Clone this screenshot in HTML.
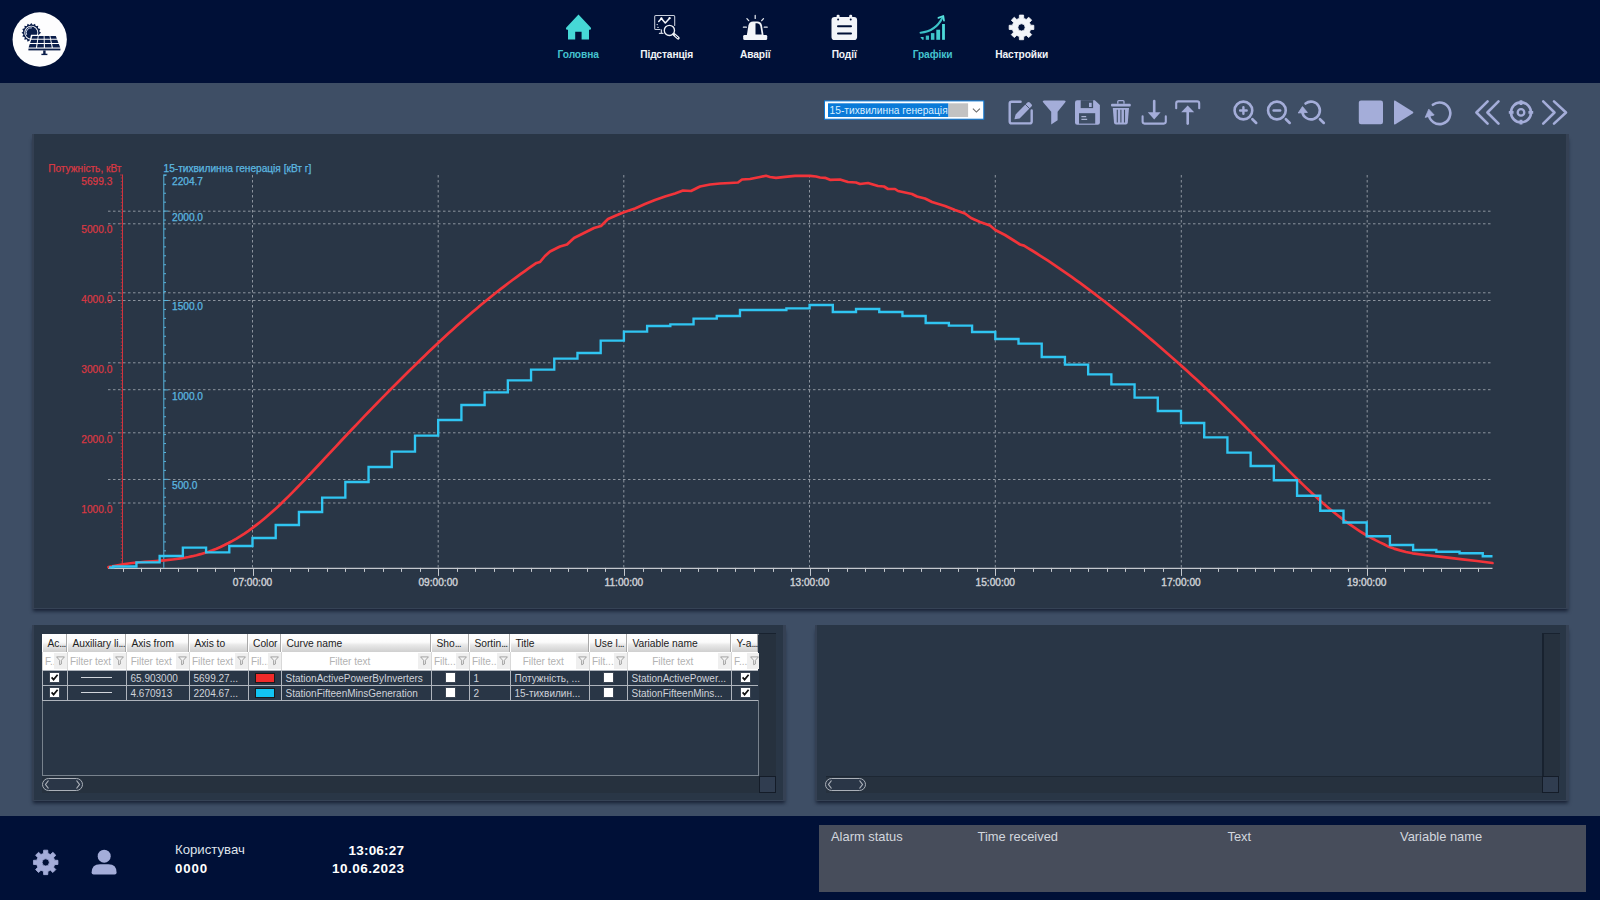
<!DOCTYPE html><html lang="uk"><head><meta charset="utf-8"><title>SCADA</title><style>
*{box-sizing:border-box;margin:0;padding:0}
html,body{width:1600px;height:900px;overflow:hidden;background:#3e4e65;font-family:"Liberation Sans",sans-serif;}
.abs{position:absolute}
#hdr{position:absolute;left:0;top:0;width:1600px;height:83px;background:#001037}
#ftr{position:absolute;left:0;top:816px;width:1600px;height:84px;background:#001037}
.panel{position:absolute;background:#293646;border-left:2px solid #344053;border-right:3px solid #354154;border-bottom:1.5px solid #354255;box-shadow:0 3.5px 3.5px -1px rgba(14,22,40,.8)}
.nav{position:absolute;top:47.5px;height:14px;line-height:14px;font-weight:bold;font-size:10.2px;color:#f2f4f8;white-space:nowrap;transform:translateX(-50%);letter-spacing:-0.1px}
.nav.on{color:#45c3d0}
svg{position:absolute;overflow:visible}
.ft{position:absolute;white-space:nowrap;color:#fff}
.al{position:absolute;top:828.6px;font-size:12.9px;line-height:15px;color:#d3d7de;white-space:nowrap}

#tb{position:absolute;left:0;top:0;font-size:10px;line-height:12px;white-space:nowrap}
#tb div{position:absolute;overflow:hidden}
.th{top:634px;height:18px;background:linear-gradient(#ffffff 0%,#fbfbfb 45%,#e9e9e9 60%,#cfcfcf 100%);color:#222;padding:3.2px 0 0 4.5px;border-left:1px solid #fff;border-right:1px solid #a9a9a9;letter-spacing:0.05px}
.tht{top:634px;height:18px;color:#222;font-size:10.25px;padding:4.1px 0 0 5.4px;overflow:visible !important}
.tf{top:652px;height:18px;background:#fff;color:#b2b2b2;padding:3.6px 0 0 2px;border-left:1px solid #d8d8d8}
.fb{top:653px;height:16px;width:11px;background:#efefef}
.td{height:15px;color:#cfd3da;padding:2.8px 0 0 4.5px}
.vl{width:1px;top:670px;height:30px;background:#aeb4bc}
.hl{height:1px;left:42px;width:716px;background:#aeb4bc}
.cb{width:11px;height:11px;background:#fff;border:1px solid #3c4654}
</style></head><body>
<div id="hdr"></div>
<svg style="left:0;top:0" width="84" height="83" viewBox="0 0 84 83">
<circle cx="39.7" cy="39.5" r="27.15" fill="#fdfdfe"/>
<polygon points="41.1,32.7 39.05,34.24 40.35,36.45 37.87,37.09 38.23,39.63 35.69,39.27 35.05,41.75 32.84,40.45 31.3,42.5 29.76,40.45 27.55,41.75 26.91,39.27 24.37,39.63 24.73,37.09 22.25,36.45 23.55,34.24 21.5,32.7 23.55,31.16 22.25,28.95 24.73,28.31 24.37,25.77 26.91,26.13 27.55,23.65 29.76,24.95 31.3,22.9 32.84,24.95 35.05,23.65 35.69,26.13 38.23,25.77 37.87,28.31 40.35,28.95 39.05,31.16" fill="#0a1d4a"/>
<circle cx="31.3" cy="32.7" r="8" fill="#0a1d4a"/>
<circle cx="31.3" cy="32.7" r="7" fill="#fdfdfe"/>
<circle cx="31.3" cy="32.7" r="6.1" fill="#0a1d4a"/>
<path d="M26.700000000000003 34.900000000000006A5 5 0 0 1 31.900000000000002 27.800000000000004" fill="none" stroke="#c9d3ea" stroke-width="1"/>
<path d="M31 34.8H57L61.4 51.4H27.2Z" fill="#fdfdfe"/>
<path d="M32.4 36.0L37.83 36.0L37.39 38.7L31.52 38.7Z" fill="#0a1d4a"/>
<path d="M38.67 36.0L43.68 36.0L43.71 38.7L38.3 38.7Z" fill="#0a1d4a"/>
<path d="M44.52 36.0L49.53 36.0L50.04 38.7L44.63 38.7Z" fill="#0a1d4a"/>
<path d="M50.37 36.0L55.8 36.0L56.82 38.7L50.95 38.7Z" fill="#0a1d4a"/>
<path d="M31.16 39.8L37.21 39.8L36.7 42.9L30.14 42.9Z" fill="#0a1d4a"/>
<path d="M38.15 39.8L43.73 39.8L43.77 42.9L37.72 42.9Z" fill="#0a1d4a"/>
<path d="M44.67 39.8L50.25 39.8L50.84 42.9L44.79 42.9Z" fill="#0a1d4a"/>
<path d="M51.19 39.8L57.24 39.8L58.42 42.9L51.86 42.9Z" fill="#0a1d4a"/>
<path d="M29.75 44.1L36.5 44.1L35.93 47.6L28.6 47.6Z" fill="#0a1d4a"/>
<path d="M37.55 44.1L43.79 44.1L43.83 47.6L37.07 47.6Z" fill="#0a1d4a"/>
<path d="M44.83 44.1L51.07 44.1L51.73 47.6L44.97 47.6Z" fill="#0a1d4a"/>
<path d="M52.12 44.1L58.87 44.1L60.2 47.6L52.87 47.6Z" fill="#0a1d4a"/>
<rect x="28.4" y="48.6" width="32" height="1.8" fill="#0a1d4a"/>
<rect x="43.2" y="50.4" width="2.4" height="3.6" fill="#0a1d4a"/>
<rect x="41.4" y="53.7" width="6" height="1.4" fill="#0a1d4a"/>
</svg>
<div class="nav on" style="left:578.2px">Головна</div>
<div class="nav" style="left:666.7px">Підстанція</div>
<div class="nav" style="left:755.2px">Аварії</div>
<div class="nav" style="left:844.2px">Події</div>
<div class="nav on" style="left:932.5px">Графіки</div>
<div class="nav" style="left:1021.7px">Настройки</div>
<svg style="left:0;top:0" width="1600" height="83" viewBox="0 0 1600 83">
<path d="M578.5 14.6L590.7 27.6Q591.8 29.8 589.6 29.8H589V39.6H581.6V31.8H575.2V39.6H568V29.8H567.4Q565.2 29.8 566.3 27.6Z" fill="#46d8d6"/>
<g fill="none" stroke="#c9cfdb" stroke-width="1.05" stroke-linecap="round" stroke-linejoin="round">
<path d="M660 29.5H655.8Q654.7 29.5 654.7 28.4V16.6Q654.7 15.5 655.8 15.5H673.6Q674.7 15.5 674.7 16.6V25.4"/>
<path d="M661.4 30V33M659.4 33.3H663" stroke-width="1.3"/>
<path d="M658.7 21.4L661.4 18.4L665.3 23L669.6 18.2" stroke-width="1.5" stroke="#f4f6fa"/>
<circle cx="669.4" cy="30.4" r="5.1" stroke-width="1.35" stroke="#eef1f6"/>
<path d="M673.9 34.3L678.2 38.1" stroke-width="3" stroke="#eef1f6"/>
</g>
<path d="M675.2 35.5L677.8 37.8" stroke="#001037" stroke-width="0.9" stroke-linecap="round"/>
<circle cx="661.4" cy="18.4" r="1.15" fill="#fff"/><circle cx="669.6" cy="18.2" r="1.15" fill="#fff"/><circle cx="657.2" cy="24.6" r="0.7" fill="#f3f5f9"/><circle cx="658" cy="27.4" r="0.7" fill="#f3f5f9"/>
<path d="M744.6 35H765.8Q767.2 35 767.2 36.3V38.7Q767.2 40 765.8 40H744.6Q743.2 40 743.2 38.7V36.3Q743.2 35 744.6 35Z" fill="#f3f5f9"/>
<path d="M746.8 35.6L748.4 25.5Q749.2 21.5 753.2 21.5H757.2Q761.2 21.5 762 25.5L763.6 35.6Z" fill="#f3f5f9"/>
<path d="M755.5 23.3H757.2Q759.7 23.3 760.3 26L761.7 34.4H755.5Z" fill="#001037"/>
<g stroke="#e4e8ee" stroke-width="1.25" stroke-linecap="round"><path d="M755.2 15.4V18.4M746.9 18.6L748.7 20.7M763.5 18.6L761.7 20.7M743.4 27.2H746.4M764.2 27.2H767.2"/></g>
<path d="M834.6 17H854Q857.1 17 857.1 20.1V36.9Q857.1 40 854 40H834.6Q831.5 40 831.5 36.9V20.1Q831.5 17 834.6 17Z" fill="#f3f5f9"/>
<rect x="836.6" y="14.8" width="3" height="4.4" rx="1.2" fill="#f3f5f9"/><rect x="849.2" y="14.8" width="3" height="4.4" rx="1.2" fill="#f3f5f9"/>
<circle cx="838.1" cy="19.6" r="1" fill="#001037"/><circle cx="850.7" cy="19.6" r="1" fill="#001037"/>
<path d="M838 26.2H851M838 33.6H851" stroke="#001037" stroke-width="2" stroke-linecap="round"/>
<g><path d="M920.3 37H923.6V39.8H922.4Z" fill="#3fc6cc"/><rect x="925.8" y="35.6" width="3.2" height="4.2" fill="#38bcc4"/><rect x="930.9" y="33.1" width="3.5" height="6.7" fill="#3ec4ca"/><rect x="936.3" y="29.7" width="3.8" height="10.1" fill="#43cdd0"/><rect x="942.1" y="24" width="2.8" height="15.8" fill="#4ddada"/></g>
<path d="M920.6 32.7Q935.6 31.4 942.4 17.8" fill="none" stroke="#3cc2c8" stroke-width="2.1" stroke-linecap="round"/>
<path d="M938.4 17.9L943.3 16L944 20.7" fill="none" stroke="#55e0dc" stroke-width="1.7" stroke-linecap="round" stroke-linejoin="round"/>
<path d="M1019.24 18.38L1019.42 15.07L1023.58 15.07L1023.76 18.38L1026.28 19.42L1028.75 17.22L1031.68 20.15L1029.48 22.62L1030.52 25.14L1033.83 25.32L1033.83 29.48L1030.52 29.66L1029.48 32.18L1031.68 34.65L1028.75 37.58L1026.28 35.38L1023.76 36.42L1023.58 39.73L1019.42 39.73L1019.24 36.42L1016.72 35.38L1014.25 37.58L1011.32 34.65L1013.52 32.18L1012.48 29.66L1009.17 29.48L1009.17 25.32L1012.48 25.14L1013.52 22.62L1011.32 20.15L1014.25 17.22L1016.72 19.42ZM1025.1 27.4A3.6 3.6 0 1 0 1017.9 27.4A3.6 3.6 0 1 0 1025.1 27.4Z" fill="#f3f5f9" fill-rule="evenodd" stroke="#f3f5f9" stroke-width="0.8" stroke-linejoin="round"/>
</svg>
<svg style="left:0;top:0" width="1000" height="130" viewBox="0 0 1000 130"><rect x="824.5" y="100.9" width="159.3" height="18.3" fill="#fff" stroke="#0a78d6" stroke-width="1"/><rect x="828" y="103.3" width="120.5" height="13.7" fill="#0a7ad8"/><rect x="948.5" y="103.3" width="19.6" height="13.7" fill="#c2c2c2"/><path d="M972.9 108.7L976.4 112.1L979.9 108.7" fill="none" stroke="#6a6a6a" stroke-width="1.1"/></svg><div class="abs" style="left:828px;top:103.6px;width:120.5px;height:13.5px;color:#d9eeff;font-size:10.2px;line-height:13.5px;padding-left:1.6px;white-space:nowrap;overflow:hidden">15-тихвилинна генерація</div>
<svg style="left:0;top:0" width="1600" height="134" viewBox="0 0 1600 134"><g fill="none" stroke="#a4add9" stroke-width="2.1" stroke-linecap="round" stroke-linejoin="round">
<path d="M1020.6 101.7H1011.6Q1009.7 101.7 1009.7 103.6V121.5Q1009.7 123.4 1011.6 123.4H1029.8Q1031.7 123.4 1031.7 121.5V110.4" stroke-width="2.4"/>
<path d="M1142.6 116.4V121.6Q1142.6 123.6 1144.6 123.6H1163.8Q1165.8 123.6 1165.8 121.6V116.4"/>
<path d="M1154.2 101V113" stroke-width="2.6"/>
<path d="M1176.2 108.2V103.4Q1176.2 101.4 1178.2 101.4H1197.2Q1199.2 101.4 1199.2 103.4V108.2"/>
<path d="M1187.7 111V123.6" stroke-width="2.6"/>
<circle cx="1243.4" cy="110.5" r="8.85" stroke-width="2.6"/>
<path d="M1252.4 119.3L1256.2 122.9" stroke-width="2.7"/>
<circle cx="1276.9" cy="110.5" r="8.85" stroke-width="2.6"/>
<path d="M1285.9 119.3L1289.7 122.9" stroke-width="2.7"/>
<path d="M1240.1 110.5H1246.7M1243.4 107.3V113.7" stroke-width="2.4"/>
<path d="M1273.6 110.5H1280.2" stroke-width="2.4"/>
<path d="M1305.55 103.53A8.85 8.85 0 1 1 1302.24 111.73" stroke-width="2.6"/>
<path d="M1320.0 119.3L1323.8 122.9" stroke-width="2.7"/>
<path d="M1432.84 104.81A10.8 10.8 0 1 1 1428.74 114.24" stroke-width="2.6"/>
<path d="M1487.6 101.4L1476.4 112.5L1487.6 123.6M1498.5 101.4L1487.4 112.5L1498.5 123.6" stroke-width="2.6"/>
<path d="M1543.2 101.4L1554.5 112.5L1543.2 123.6M1554 101.4L1566 112.5L1554 123.6" stroke-width="2.6"/>
<circle cx="1521" cy="112.4" r="10" stroke-width="2.6"/><circle cx="1521" cy="112.4" r="3.3" stroke-width="2.3"/>
<path d="M1521 100.2V105.0M1521 124.60000000000001V119.80000000000001M1508.8 112.4H1513.6M1533.2 112.4H1528.4" stroke-width="2.8" stroke-linecap="butt"/>
</g>
<g fill="#a4add9">
<path d="M1014.4 119.2L1015.6 114.4L1027.4 102.6Q1028.6 101.4 1029.8 102.6L1031.4 104.2Q1032.6 105.4 1031.4 106.6L1019.6 118.4Z"/>
<path d="M1044.2 100.5H1064.2Q1066.6 100.5 1065.1 102.4L1057.6 111.8V120.2L1051.2 124.6V111.8L1043.3 102.4Q1041.8 100.5 1044.2 100.5Z"/>
<path d="M1077.2 100.3H1094.8L1099.9 105V122.6Q1099.9 124.8 1097.7 124.8H1077.2Q1075 124.8 1075 122.6V102.5Q1075 100.3 1077.2 100.3Z"/>
<path d="M1112 103.8H1129.8Q1130.8 103.8 1130.8 104.9V105.4Q1130.8 106.4 1129.8 106.4H1112Q1111 106.4 1111 105.4V104.9Q1111 103.8 1112 103.8Z"/>
<path d="M1112.8 108H1129L1127.8 122.6Q1127.6 124.5 1125.8 124.5H1116Q1114.2 124.5 1114 122.6Z"/>
<path d="M1147.8 112.2H1160.6L1154.2 119.4Z"/>
<path d="M1181.2 112.2H1194.2L1187.7 105.4Z"/>
<path d="M1302.5 106.6L1298.2 113L1307.4 112.4Z" stroke="#a4add9" stroke-width="0.8" stroke-linejoin="round"/>
<path d="M1428.8 109.2L1425.2 117.4L1434.2 115Z" stroke="#a4add9" stroke-width="0.8" stroke-linejoin="round"/>
<rect x="1358.8" y="100.5" width="24.2" height="23.8" rx="2.2"/>
<path d="M1395 100.6Q1394 100.2 1394 101.4V123.6Q1394 124.8 1395 124.4L1413 113.2Q1413.8 112.5 1413 111.8Z"/>
</g>
<rect x="1080.7" y="100.2" width="12.4" height="7.9" fill="#3e4e65"/><rect x="1089" y="102.8" width="2.7" height="4.2" fill="#a4add9"/>
<rect x="1079" y="113.2" width="16.2" height="10.4" fill="#3e4e65"/>
<path d="M1081.4 116.7H1086.2M1081.4 119.3H1087.2" stroke="#c4cbeb" stroke-width="1"/>
<path d="M1117.8 103.8V101.6Q1117.8 100.7 1118.8 100.7H1123Q1124 100.7 1124 101.6V103.8" fill="none" stroke="#a4add9" stroke-width="1.3"/>
<path d="M1117.3 109.8V122.4M1120.9 109.8V122.4M1124.5 109.8V122.4" stroke="#3e4e65" stroke-width="1.1"/>
<path d="M1025.2 104.2L1029.8 108.8" stroke="#3e4e65" stroke-width="0.9"/>
</svg>
<div class="panel" style="left:32px;top:134px;width:1537px;height:475.3px"></div>
<svg style="left:0;top:0" width="1600" height="900" viewBox="0 0 1600 900" font-family="'Liberation Sans',sans-serif" font-size="10.15">
<g stroke="#c0c5cc" stroke-width="1" stroke-dasharray="2.5 2.5" opacity="0.66" fill="none">
<path d="M108.0 223.8H1491.5"/>
<path d="M108.0 292.8H1491.5"/>
<path d="M108.0 362.8H1491.5"/>
<path d="M108.0 432.8H1491.5"/>
<path d="M108.0 503.0H1491.5"/>
<path d="M108.0 211.2H1491.5"/>
<path d="M108.0 300.5H1491.5"/>
<path d="M108.0 389.7H1491.5"/>
<path d="M108.0 479.5H1491.5"/>
<path d="M252.5 175V567.5"/>
<path d="M438.2 175V567.5"/>
<path d="M623.8 175V567.5"/>
<path d="M809.5 175V567.5"/>
<path d="M995.3 175V567.5"/>
<path d="M1181.3 175V567.5"/>
<path d="M1367.2 175V567.5"/>
</g>
<path d="M108.0 568.4H1492.5" stroke="#c4c8ce" stroke-width="1.4" fill="none"/>
<path d="M123.5 567.9V571.9M141.5 567.9V571.9M160.5 567.9V571.9M178.5 567.9V571.9M197.5 567.9V571.9M215.5 567.9V571.9M234.5 567.9V571.9M253.5 567.9V575.9M271.5 567.9V571.9M290.5 567.9V571.9M308.5 567.9V571.9M327.5 567.9V571.9M345.5 567.9V571.9M364.5 567.9V571.9M383.5 567.9V571.9M401.5 567.9V571.9M420.5 567.9V571.9M438.5 567.9V575.9M457.5 567.9V571.9M475.5 567.9V571.9M494.5 567.9V571.9M513.5 567.9V571.9M531.5 567.9V571.9M550.5 567.9V571.9M568.5 567.9V571.9M587.5 567.9V571.9M605.5 567.9V571.9M624.5 567.9V575.9M643.5 567.9V571.9M661.5 567.9V571.9M680.5 567.9V571.9M698.5 567.9V571.9M717.5 567.9V571.9M735.5 567.9V571.9M754.5 567.9V571.9M773.5 567.9V571.9M791.5 567.9V571.9M810.5 567.9V575.9M828.5 567.9V571.9M847.5 567.9V571.9M865.5 567.9V571.9M884.5 567.9V571.9M903.5 567.9V571.9M921.5 567.9V571.9M940.5 567.9V571.9M958.5 567.9V571.9M977.5 567.9V571.9M995.5 567.9V575.9M1014.5 567.9V571.9M1033.5 567.9V571.9M1051.5 567.9V571.9M1070.5 567.9V571.9M1088.5 567.9V571.9M1107.5 567.9V571.9M1125.5 567.9V571.9M1144.5 567.9V571.9M1163.5 567.9V571.9M1181.5 567.9V575.9M1200.5 567.9V571.9M1218.5 567.9V571.9M1237.5 567.9V571.9M1255.5 567.9V571.9M1274.5 567.9V571.9M1293.5 567.9V571.9M1311.5 567.9V571.9M1330.5 567.9V571.9M1348.5 567.9V571.9M1367.5 567.9V575.9M1385.5 567.9V571.9M1404.5 567.9V571.9M1423.5 567.9V571.9M1441.5 567.9V571.9M1460.5 567.9V571.9M1478.5 567.9V571.9" stroke="#c4c8ce" stroke-width="1" fill="none"/>
<text x="252.5" y="585.6" text-anchor="middle" fill="#cdd0d5" stroke="#cdd0d5" stroke-width="0.4">07:00:00</text>
<text x="438.2" y="585.6" text-anchor="middle" fill="#cdd0d5" stroke="#cdd0d5" stroke-width="0.4">09:00:00</text>
<text x="623.9" y="585.6" text-anchor="middle" fill="#cdd0d5" stroke="#cdd0d5" stroke-width="0.4">11:00:00</text>
<text x="809.6" y="585.6" text-anchor="middle" fill="#cdd0d5" stroke="#cdd0d5" stroke-width="0.4">13:00:00</text>
<text x="995.3" y="585.6" text-anchor="middle" fill="#cdd0d5" stroke="#cdd0d5" stroke-width="0.4">15:00:00</text>
<text x="1181" y="585.6" text-anchor="middle" fill="#cdd0d5" stroke="#cdd0d5" stroke-width="0.4">17:00:00</text>
<text x="1366.7" y="585.6" text-anchor="middle" fill="#cdd0d5" stroke="#cdd0d5" stroke-width="0.4">19:00:00</text>
<path d="M122.5 174.5V567.9" stroke="#d0343f" stroke-width="1" fill="none"/>
<path d="M122.5 565.52h-1.7M122.5 562.03h-1.7M122.5 558.54h-1.7M122.5 555.04h-1.7M122.5 551.55h-1.7M122.5 548.06h-1.7M122.5 544.57h-1.7M122.5 541.08h-1.7M122.5 537.59h-1.7M122.5 534.09h-1.7M122.5 530.6h-1.7M122.5 527.11h-1.7M122.5 523.62h-1.7M122.5 520.13h-1.7M122.5 516.64h-1.7M122.5 513.14h-1.7M122.5 509.65h-1.7M122.5 506.16h-1.7M122.5 502.67h-3M122.5 499.18h-1.7M122.5 495.68h-1.7M122.5 492.19h-1.7M122.5 488.7h-1.7M122.5 485.21h-1.7M122.5 481.72h-1.7M122.5 478.23h-1.7M122.5 474.73h-1.7M122.5 471.24h-1.7M122.5 467.75h-1.7M122.5 464.26h-1.7M122.5 460.77h-1.7M122.5 457.28h-1.7M122.5 453.78h-1.7M122.5 450.29h-1.7M122.5 446.8h-1.7M122.5 443.31h-1.7M122.5 439.82h-1.7M122.5 436.33h-1.7M122.5 432.83h-3M122.5 429.34h-1.7M122.5 425.85h-1.7M122.5 422.36h-1.7M122.5 418.87h-1.7M122.5 415.38h-1.7M122.5 411.88h-1.7M122.5 408.39h-1.7M122.5 404.9h-1.7M122.5 401.41h-1.7M122.5 397.92h-1.7M122.5 394.43h-1.7M122.5 390.93h-1.7M122.5 387.44h-1.7M122.5 383.95h-1.7M122.5 380.46h-1.7M122.5 376.97h-1.7M122.5 373.48h-1.7M122.5 369.98h-1.7M122.5 366.49h-1.7M122.5 363h-3M122.5 359.51h-1.7M122.5 356.02h-1.7M122.5 352.53h-1.7M122.5 349.03h-1.7M122.5 345.54h-1.7M122.5 342.05h-1.7M122.5 338.56h-1.7M122.5 335.07h-1.7M122.5 331.58h-1.7M122.5 328.08h-1.7M122.5 324.59h-1.7M122.5 321.1h-1.7M122.5 317.61h-1.7M122.5 314.12h-1.7M122.5 310.63h-1.7M122.5 307.13h-1.7M122.5 303.64h-1.7M122.5 300.15h-1.7M122.5 296.66h-1.7M122.5 293.17h-3M122.5 289.67h-1.7M122.5 286.18h-1.7M122.5 282.69h-1.7M122.5 279.2h-1.7M122.5 275.71h-1.7M122.5 272.22h-1.7M122.5 268.72h-1.7M122.5 265.23h-1.7M122.5 261.74h-1.7M122.5 258.25h-1.7M122.5 254.76h-1.7M122.5 251.27h-1.7M122.5 247.77h-1.7M122.5 244.28h-1.7M122.5 240.79h-1.7M122.5 237.3h-1.7M122.5 233.81h-1.7M122.5 230.32h-1.7M122.5 226.82h-1.7M122.5 223.33h-3M122.5 219.84h-1.7M122.5 216.35h-1.7M122.5 212.86h-1.7M122.5 209.37h-1.7M122.5 205.87h-1.7M122.5 202.38h-1.7M122.5 198.89h-1.7M122.5 195.4h-1.7M122.5 191.91h-1.7M122.5 188.42h-1.7M122.5 184.92h-1.7M122.5 181.43h-1.7M122.5 177.94h-1.7M122.5 175.0h-2.5" stroke="#d0343f" stroke-width="1" fill="none" opacity="0.7"/>
<path d="M163.8 174.5V567.9M163.8 559.79h2.2M163.8 550.85h2.2M163.8 541.91h2.2M163.8 532.97h2.2M163.8 524.03h2.2M163.8 515.09h2.2M163.8 506.15h2.2M163.8 497.21h2.2M163.8 488.27h2.2M163.8 479.33h4.5M163.8 470.39h2.2M163.8 461.44h2.2M163.8 452.5h2.2M163.8 443.56h2.2M163.8 434.62h2.2M163.8 425.68h2.2M163.8 416.74h2.2M163.8 407.8h2.2M163.8 398.86h2.2M163.8 389.92h4.5M163.8 380.98h2.2M163.8 372.04h2.2M163.8 363.09h2.2M163.8 354.15h2.2M163.8 345.21h2.2M163.8 336.27h2.2M163.8 327.33h2.2M163.8 318.39h2.2M163.8 309.45h2.2M163.8 300.51h4.5M163.8 291.57h2.2M163.8 282.63h2.2M163.8 273.69h2.2M163.8 264.74h2.2M163.8 255.8h2.2M163.8 246.86h2.2M163.8 237.92h2.2M163.8 228.98h2.2M163.8 220.04h2.2M163.8 211.1h4.5M163.8 202.16h2.2M163.8 193.22h2.2M163.8 184.28h2.2M163.8 175.34h2.2M163.8 175.0h3" stroke="#58b4dc" stroke-width="1" fill="none"/>
<g fill="#d83843" stroke="#d83843" stroke-width="0.25" text-anchor="end">
<text x="121.5" y="172" >Потужність, кВт</text>
<text x="112.3" y="185.4">5699.3</text>
<text x="112.3" y="512.57">1000.0</text>
<text x="112.3" y="442.73">2000.0</text>
<text x="112.3" y="372.9">3000.0</text>
<text x="112.3" y="303.07">4000.0</text>
<text x="112.3" y="233.23">5000.0</text>
</g>
<g fill="#5cb8e0" stroke="#5cb8e0" stroke-width="0.25">
<text x="163.5" y="172">15-тихвилинна генерація [кВт г]</text>
<text x="172" y="185.4">2204.7</text>
<text x="172" y="489.23">500.0</text>
<text x="172" y="399.82">1000.0</text>
<text x="172" y="310.41">1500.0</text>
<text x="172" y="221">2000.0</text>
</g>
<polyline points="108.5,567.2 112.5,566.44 116.5,565.52 120.5,564.73 124.5,564.06 128.5,563.49 132.5,563.01 136.5,562.59 140.5,562.23 144.5,561.9 148.5,561.6 152.5,561.31 156.5,561.01 160.5,560.69 164.5,560.35 168.5,559.96 172.5,559.52 176.5,559.02 180.5,558.44 184.5,557.78 188.5,557.04 192.5,556.19 196.5,555.24 200.5,554.17 204.5,552.98 208.5,551.67 212.5,550.22 216.5,548.64 220.5,546.92 224.5,545.06 228.5,543.05 232.5,540.89 236.5,538.59 240.5,536.14 244.5,533.55 248.5,530.81 252.5,527.93 256.5,524.91 260.5,521.75 264.5,518.47 268.5,515.06 272.5,511.53 276.5,507.88 280.5,504.14 284.5,500.3 288.5,496.37 292.5,492.36 296.5,488.29 300.5,484.16 304.5,479.99 308.5,475.78 312.5,471.53 316.5,467.27 320.5,462.99 324.5,458.69 328.5,454.4 332.5,450.1 336.5,445.81 340.5,441.53 344.5,437.27 348.5,433.01 352.5,428.78 356.5,424.56 360.5,420.37 364.5,416.19 368.5,412.04 372.5,407.9 376.5,403.78 380.5,399.68 384.5,395.61 388.5,391.54 392.5,387.5 396.5,383.48 400.5,379.48 404.5,375.5 408.5,371.54 412.5,367.6 416.5,363.68 420.5,359.79 424.5,355.92 428.5,352.08 432.5,348.27 436.5,344.49 440.5,340.74 444.5,337.02 448.5,333.34 452.5,329.69 456.5,326.09 460.5,322.52 464.5,318.99 468.5,315.5 472.5,312.06 476.5,308.66 480.5,305.3 484.5,301.99 488.5,298.72 492.5,295.49 496.5,292.31 500.5,289.17 504.5,286.08 508.5,283.03 512.5,280.03 516.5,277.07 520.5,274.16 524.5,271.29 528.5,268.46 532.5,265.68 536.5,262.95 540,262 545,256 550,251.5 560,246.5 567,244.5 574,238 585,232.5 594,228 601,226 608,219 616,215.5 623.8,212.2 635,208.5 645,204 655,200 665,196.5 675,193.5 683,190.5 691,191 700,186.5 710,184.5 720,183.5 730,183 738,182.5 742,179.5 750,179 760,177 766,175.8 770,177 776,177.8 785,176.8 795,175.8 800,175.8 810,175.8 816,176.5 820,177.5 825,177.8 830,179.8 840,179.5 848,182 856,182.5 860,184 868,183 878,186 884,186.5 888,189 895,189 898,191 912,194 917,196.5 925,198.5 932,202 945,206 955,210 965,213.5 971,218 980,222 990,225.5 995.3,230 1005,235 1013,240 1020,244.5 1024,245.62 1028,248.04 1032,250.49 1036,252.99 1040,255.53 1044,258.1 1048,260.72 1052,263.37 1056,266.06 1060,268.79 1064,271.55 1068,274.35 1072,277.19 1076,280.06 1080,282.96 1084,285.9 1088,288.87 1092,291.87 1096,294.9 1100,297.96 1104,301.05 1108,304.17 1112,307.32 1116,310.49 1120,313.69 1124,316.91 1128,320.16 1132,323.43 1136,326.73 1140,330.05 1144,333.39 1148,336.76 1152,340.15 1156,343.56 1160,347 1164,350.46 1168,353.95 1172,357.46 1176,360.99 1180,364.55 1184,368.13 1188,371.74 1192,375.38 1196,379.05 1200,382.74 1204,386.46 1208,390.21 1212,394 1216,397.81 1220,401.65 1224,405.53 1228,409.43 1232,413.36 1236,417.32 1240,421.3 1244,425.3 1248,429.33 1252,433.37 1256,437.43 1260,441.49 1264,445.57 1268,449.64 1272,453.72 1276,457.78 1280,461.84 1284,465.88 1288,469.9 1292,473.89 1296,477.84 1300,481.75 1304,485.62 1308,489.43 1312,493.17 1316,496.85 1320,500.45 1324,503.97 1328,507.41 1332,510.76 1336,514.01 1340,517.16 1344,520.2 1348,523.14 1352,525.96 1356,528.67 1360,531.26 1364,533.73 1368,536.08 1372,538.31 1376,540.4 1380,542.37 1384,544.21 1388,546.4 1394,548.6 1400,550.4 1406,552 1412.5,553.3 1425,555 1437.5,556.4 1450,557.8 1462.5,559.3 1477,561 1492.5,563" stroke="#f2343a" stroke-width="2.7" fill="none" stroke-linejoin="round" stroke-linecap="round"/>
<path d="M109 567.4H113.23V566.5H136.44V562.4H159.65V556H182.86V547.6H206.07V552.4H229.29V546H252.5V538H275.71V525H298.93V512H322.14V497.6H345.35V482H368.56V467H391.77V451.6H414.99V435.6H438.2V420H461.41V405H484.62V392.4H507.84V380.4H531.05V369.6H554.26V358.6H577.47V353H600.69V340.6H623.9V331.6H647.11V326H670.33V324.4H693.54V318.6H716.75V316H739.96V310H763.17V310H786.39V308.4H809.6V305H832.81V312H856.02V309H879.24V312H902.45V316H925.66V323H948.88V325.6H972.09V332H995.3V339H1018.51V343.6H1041.72V357H1064.94V364.6H1088.15V374.4H1111.36V384.4H1134.57V397.6H1157.79V411H1181V423H1204.21V437.4H1227.42V452.6H1250.64V466H1273.85V480.2H1297.06V495.75H1320.27V510.75H1343.49V522.5H1366.7V536.25H1389.91V545H1413.12V550H1436.34V551.75H1459.55V553.25H1482.76V556.25H1492.5" stroke="#30c5f2" stroke-width="2.35" fill="none" stroke-linejoin="miter"/>
</svg>
<div class="panel" style="left:32px;top:625px;width:754px;height:176px"></div>
<div id="tb">
<div style="left:42px;top:634px;width:717px;height:142px;border:1px solid #78828d;border-right:none"></div>
<div style="left:758.5px;top:633px;width:17px;height:143px;background:#26313e;border-top:1.5px solid #18222f"></div>
<div style="left:42px;top:776px;width:717px;height:17px;background:#26313e"></div>
<div style="left:759px;top:776px;width:17px;height:17px;background:#303d50;border:1px solid #141c28"></div>
<div style="left:42px;top:778px;width:41px;height:13px;border:1.3px solid #aab0b8;border-radius:7px;background:#2a3647"></div>
<div class="th" style="left:42px;width:25px;"></div>
<div class="tf" style="left:42px;width:25px">F...</div>
<div class="fb" style="left:54px;width:13px"></div>
<div class="th" style="left:67px;width:59px;"></div>
<div class="tf" style="left:67px;width:59px">Filter text</div>
<div class="fb" style="left:113px;width:13px"></div>
<div class="th" style="left:126px;width:63px;"></div>
<div class="tf" style="left:126px;width:63px;text-align:center;padding-right:15.5px">Filter text</div>
<div class="fb" style="left:176px;width:13px"></div>
<div class="th" style="left:189px;width:59px;"></div>
<div class="tf" style="left:189px;width:59px">Filter text</div>
<div class="fb" style="left:235px;width:13px"></div>
<div class="th" style="left:248px;width:33px;"></div>
<div class="tf" style="left:248px;width:33px">Fil...</div>
<div class="fb" style="left:268px;width:13px"></div>
<div class="th" style="left:281px;width:150px;"></div>
<div class="tf" style="left:281px;width:150px;text-align:center;padding-right:15.5px">Filter text</div>
<div class="fb" style="left:418px;width:13px"></div>
<div class="th" style="left:431px;width:38px;"></div>
<div class="tf" style="left:431px;width:38px">Filt...</div>
<div class="fb" style="left:456px;width:13px"></div>
<div class="th" style="left:469px;width:41px;"></div>
<div class="tf" style="left:469px;width:41px">Filte...</div>
<div class="fb" style="left:497px;width:13px"></div>
<div class="th" style="left:510px;width:79px;"></div>
<div class="tf" style="left:510px;width:79px;text-align:center;padding-right:15.5px">Filter text</div>
<div class="fb" style="left:576px;width:13px"></div>
<div class="th" style="left:589px;width:38px;"></div>
<div class="tf" style="left:589px;width:38px">Filt...</div>
<div class="fb" style="left:614px;width:13px"></div>
<div class="th" style="left:627px;width:104px;"></div>
<div class="tf" style="left:627px;width:104px;text-align:center;padding-right:15.5px">Filter text</div>
<div class="fb" style="left:718px;width:13px"></div>
<div class="th" style="left:731px;width:27px;"></div>
<div class="tf" style="left:731px;width:27px">F...</div>
<div class="fb" style="left:747px;width:13px"></div>
<div class="tht" style="left:42px;width:25px;">Ac<span style="letter-spacing:-0.8px">...</span></div>
<div class="tht" style="left:67px;width:59px;">Auxiliary li<span style="letter-spacing:-0.8px">...</span></div>
<div class="tht" style="left:126px;width:63px;">Axis from</div>
<div class="tht" style="left:189px;width:59px;">Axis to</div>
<div class="tht" style="left:248px;width:33px;text-align:right;padding-right:3.5px;padding-left:0;">Color</div>
<div class="tht" style="left:281px;width:150px;">Curve name</div>
<div class="tht" style="left:431px;width:38px;">Sho<span style="letter-spacing:-0.8px">...</span></div>
<div class="tht" style="left:469px;width:41px;">Sortin<span style="letter-spacing:-0.8px">...</span></div>
<div class="tht" style="left:510px;width:79px;">Title</div>
<div class="tht" style="left:589px;width:38px;">Use l<span style="letter-spacing:-0.8px">...</span></div>
<div class="tht" style="left:627px;width:104px;">Variable name</div>
<div class="tht" style="left:731px;width:27px;">Y-a<span style="letter-spacing:-0.8px">...</span></div>
<svg style="left:56px;top:656px" width="9" height="10" viewBox="0 0 9 10"><path d="M0.6 0.9H8.4L5.4 4.3V8L3.6 8.7V4.3Z" fill="#f4f4f4" stroke="#9a9a9a" stroke-width="0.9" stroke-linejoin="round"/></svg>
<svg style="left:115px;top:656px" width="9" height="10" viewBox="0 0 9 10"><path d="M0.6 0.9H8.4L5.4 4.3V8L3.6 8.7V4.3Z" fill="#f4f4f4" stroke="#9a9a9a" stroke-width="0.9" stroke-linejoin="round"/></svg>
<svg style="left:178px;top:656px" width="9" height="10" viewBox="0 0 9 10"><path d="M0.6 0.9H8.4L5.4 4.3V8L3.6 8.7V4.3Z" fill="#f4f4f4" stroke="#9a9a9a" stroke-width="0.9" stroke-linejoin="round"/></svg>
<svg style="left:237px;top:656px" width="9" height="10" viewBox="0 0 9 10"><path d="M0.6 0.9H8.4L5.4 4.3V8L3.6 8.7V4.3Z" fill="#f4f4f4" stroke="#9a9a9a" stroke-width="0.9" stroke-linejoin="round"/></svg>
<svg style="left:270px;top:656px" width="9" height="10" viewBox="0 0 9 10"><path d="M0.6 0.9H8.4L5.4 4.3V8L3.6 8.7V4.3Z" fill="#f4f4f4" stroke="#9a9a9a" stroke-width="0.9" stroke-linejoin="round"/></svg>
<svg style="left:420px;top:656px" width="9" height="10" viewBox="0 0 9 10"><path d="M0.6 0.9H8.4L5.4 4.3V8L3.6 8.7V4.3Z" fill="#f4f4f4" stroke="#9a9a9a" stroke-width="0.9" stroke-linejoin="round"/></svg>
<svg style="left:458px;top:656px" width="9" height="10" viewBox="0 0 9 10"><path d="M0.6 0.9H8.4L5.4 4.3V8L3.6 8.7V4.3Z" fill="#f4f4f4" stroke="#9a9a9a" stroke-width="0.9" stroke-linejoin="round"/></svg>
<svg style="left:499px;top:656px" width="9" height="10" viewBox="0 0 9 10"><path d="M0.6 0.9H8.4L5.4 4.3V8L3.6 8.7V4.3Z" fill="#f4f4f4" stroke="#9a9a9a" stroke-width="0.9" stroke-linejoin="round"/></svg>
<svg style="left:578px;top:656px" width="9" height="10" viewBox="0 0 9 10"><path d="M0.6 0.9H8.4L5.4 4.3V8L3.6 8.7V4.3Z" fill="#f4f4f4" stroke="#9a9a9a" stroke-width="0.9" stroke-linejoin="round"/></svg>
<svg style="left:616px;top:656px" width="9" height="10" viewBox="0 0 9 10"><path d="M0.6 0.9H8.4L5.4 4.3V8L3.6 8.7V4.3Z" fill="#f4f4f4" stroke="#9a9a9a" stroke-width="0.9" stroke-linejoin="round"/></svg>
<svg style="left:720px;top:656px" width="9" height="10" viewBox="0 0 9 10"><path d="M0.6 0.9H8.4L5.4 4.3V8L3.6 8.7V4.3Z" fill="#f4f4f4" stroke="#9a9a9a" stroke-width="0.9" stroke-linejoin="round"/></svg>
<svg style="left:749.5px;top:656px" width="9" height="10" viewBox="0 0 9 10"><path d="M0.6 0.9H8.4L5.4 4.3V8L3.6 8.7V4.3Z" fill="#f4f4f4" stroke="#9a9a9a" stroke-width="0.9" stroke-linejoin="round"/></svg>
<div class="cb" style="left:49px;top:672px;overflow:visible"></div>
<svg style="left:50px;top:673px" width="9" height="9" viewBox="0 0 9 9"><path d="M1.6 4.4L3.6 6.6L7.6 1.8" fill="none" stroke="#111" stroke-width="1.7"/></svg>
<div style="left:81px;top:677px;width:31px;height:1px;background:#d2d6dc"></div>
<div class="td" style="left:126px;top:670px;width:63px">65.903000</div>
<div class="td" style="left:189px;top:670px;width:59px">5699.27...</div>
<div style="left:255px;top:673px;width:20px;height:10px;background:#f02a2a;border:1px solid #1a1a1a"></div>
<div class="td" style="left:281px;top:670px;width:150px">StationActivePowerByInverters</div>
<div class="cb" style="left:445px;top:672px;overflow:visible"></div>
<div class="td" style="left:469px;top:670px;width:41px">1</div>
<div class="td" style="left:510px;top:670px;width:79px">Потужність, ...</div>
<div class="cb" style="left:603px;top:672px;overflow:visible"></div>
<div class="td" style="left:627px;top:670px;width:104px">StationActivePower...</div>
<div class="cb" style="left:740px;top:672px;overflow:visible"></div>
<svg style="left:741px;top:673px" width="9" height="9" viewBox="0 0 9 9"><path d="M1.6 4.4L3.6 6.6L7.6 1.8" fill="none" stroke="#111" stroke-width="1.7"/></svg>
<div class="cb" style="left:49px;top:687px;overflow:visible"></div>
<svg style="left:50px;top:688px" width="9" height="9" viewBox="0 0 9 9"><path d="M1.6 4.4L3.6 6.6L7.6 1.8" fill="none" stroke="#111" stroke-width="1.7"/></svg>
<div style="left:81px;top:692px;width:31px;height:1px;background:#d2d6dc"></div>
<div class="td" style="left:126px;top:685px;width:63px">4.670913</div>
<div class="td" style="left:189px;top:685px;width:59px">2204.67...</div>
<div style="left:255px;top:688px;width:20px;height:10px;background:#12c4f2;border:1px solid #1a1a1a"></div>
<div class="td" style="left:281px;top:685px;width:150px">StationFifteenMinsGeneration</div>
<div class="cb" style="left:445px;top:687px;overflow:visible"></div>
<div class="td" style="left:469px;top:685px;width:41px">2</div>
<div class="td" style="left:510px;top:685px;width:79px">15-тихвилин...</div>
<div class="cb" style="left:603px;top:687px;overflow:visible"></div>
<div class="td" style="left:627px;top:685px;width:104px">StationFifteenMins...</div>
<div class="cb" style="left:740px;top:687px;overflow:visible"></div>
<svg style="left:741px;top:688px" width="9" height="9" viewBox="0 0 9 9"><path d="M1.6 4.4L3.6 6.6L7.6 1.8" fill="none" stroke="#111" stroke-width="1.7"/></svg>
<div class="vl" style="left:42px"></div>
<div class="vl" style="left:67px"></div>
<div class="vl" style="left:126px"></div>
<div class="vl" style="left:189px"></div>
<div class="vl" style="left:248px"></div>
<div class="vl" style="left:281px"></div>
<div class="vl" style="left:431px"></div>
<div class="vl" style="left:469px"></div>
<div class="vl" style="left:510px"></div>
<div class="vl" style="left:589px"></div>
<div class="vl" style="left:627px"></div>
<div class="vl" style="left:731px"></div>
<div class="hl" style="top:670px"></div>
<div class="hl" style="top:685px"></div>
<div class="hl" style="top:700px"></div>
<div style="left:758px;top:700px;width:1px;height:76px;background:#78828d"></div>
</div>
<div class="abs" style="left:758.5px;top:633px;width:17px;height:143px;background:#26313e;border-top:1.5px solid #18222f"></div>
<svg style="left:42px;top:778px" width="41" height="13" viewBox="0 0 41 13"><path d="M6.5 2.5L3.5 6.5L6.5 10.5M34.5 2.5L37.5 6.5L34.5 10.5" fill="none" stroke="#aab0b8" stroke-width="1.2"/></svg>
<div class="panel" style="left:815px;top:625px;width:754px;height:176px"></div>
<div class="abs" style="left:1542px;top:633px;width:18px;height:143px;background:#26313e;border-left:2px solid #18222f;border-top:1.5px solid #18222f"></div><div class="abs" style="left:826px;top:776px;width:717px;height:17px;background:#26313e;border-top:1px solid #1d2733"></div><div class="abs" style="left:1542px;top:776px;width:17px;height:17px;background:#303d50;border:1px solid #141c28"></div><div class="abs" style="left:825px;top:778px;width:41px;height:13px;border:1.3px solid #aab0b8;border-radius:7px;background:#2a3647"></div><svg style="left:825px;top:778px" width="41" height="13" viewBox="0 0 41 13"><path d="M6.5 2.5L3.5 6.5L6.5 10.5M34.5 2.5L37.5 6.5L34.5 10.5" fill="none" stroke="#aab0b8" stroke-width="1.2"/></svg>
<div id="ftr"></div>
<svg style="left:0;top:816px" width="200" height="84" viewBox="0 816 200 84">
<path d="M43.46 853.48L43.64 850.17L47.76 850.17L47.94 853.48L50.43 854.51L52.89 852.3L55.8 855.21L53.59 857.67L54.62 860.16L57.93 860.34L57.93 864.46L54.62 864.64L53.59 867.13L55.8 869.59L52.89 872.5L50.43 870.29L47.94 871.32L47.76 874.63L43.64 874.63L43.46 871.32L40.97 870.29L38.51 872.5L35.6 869.59L37.81 867.13L36.78 864.64L33.47 864.46L33.47 860.34L36.78 860.16L37.81 857.67L35.6 855.21L38.51 852.3L40.97 854.51ZM49.3 862.4A3.6 3.6 0 1 0 42.1 862.4A3.6 3.6 0 1 0 49.3 862.4Z" fill="#a4add9" fill-rule="evenodd" stroke="#a4add9" stroke-width="0.8" stroke-linejoin="round"/>
<circle cx="104.2" cy="856.2" r="6.5" fill="#a4add9"/>
<path d="M91.6 872.6Q91.6 864.2 100 864.2H108.4Q116.6 864.2 116.6 872.6Q116.6 874.6 114.6 874.6H93.6Q91.6 874.6 91.6 872.6Z" fill="#a4add9"/>
</svg>
<div class="ft" style="left:175px;top:842px;font-size:13.2px;line-height:15px;color:#dfe3ea">Користувач</div>
<div class="ft" style="left:175px;top:860.8px;font-size:13.3px;line-height:16px;font-weight:bold;letter-spacing:0.85px">0000</div>
<div class="ft" style="left:304px;width:100.2px;text-align:right;top:842.6px;font-size:13.5px;line-height:16px;font-weight:bold;letter-spacing:0.2px">13:06:27</div>
<div class="ft" style="left:304px;width:100.5px;text-align:right;top:860.8px;font-size:13.5px;line-height:16px;font-weight:bold;letter-spacing:0.5px">10.06.2023</div>
<div class="abs" style="left:819px;top:825px;width:767px;height:67px;background:#474d5b"></div>
<div class="al" style="left:831px">Alarm status</div>
<div class="al" style="left:977.5px">Time received</div>
<div class="al" style="left:1227.5px">Text</div>
<div class="al" style="left:1400px">Variable name</div>
</body></html>
